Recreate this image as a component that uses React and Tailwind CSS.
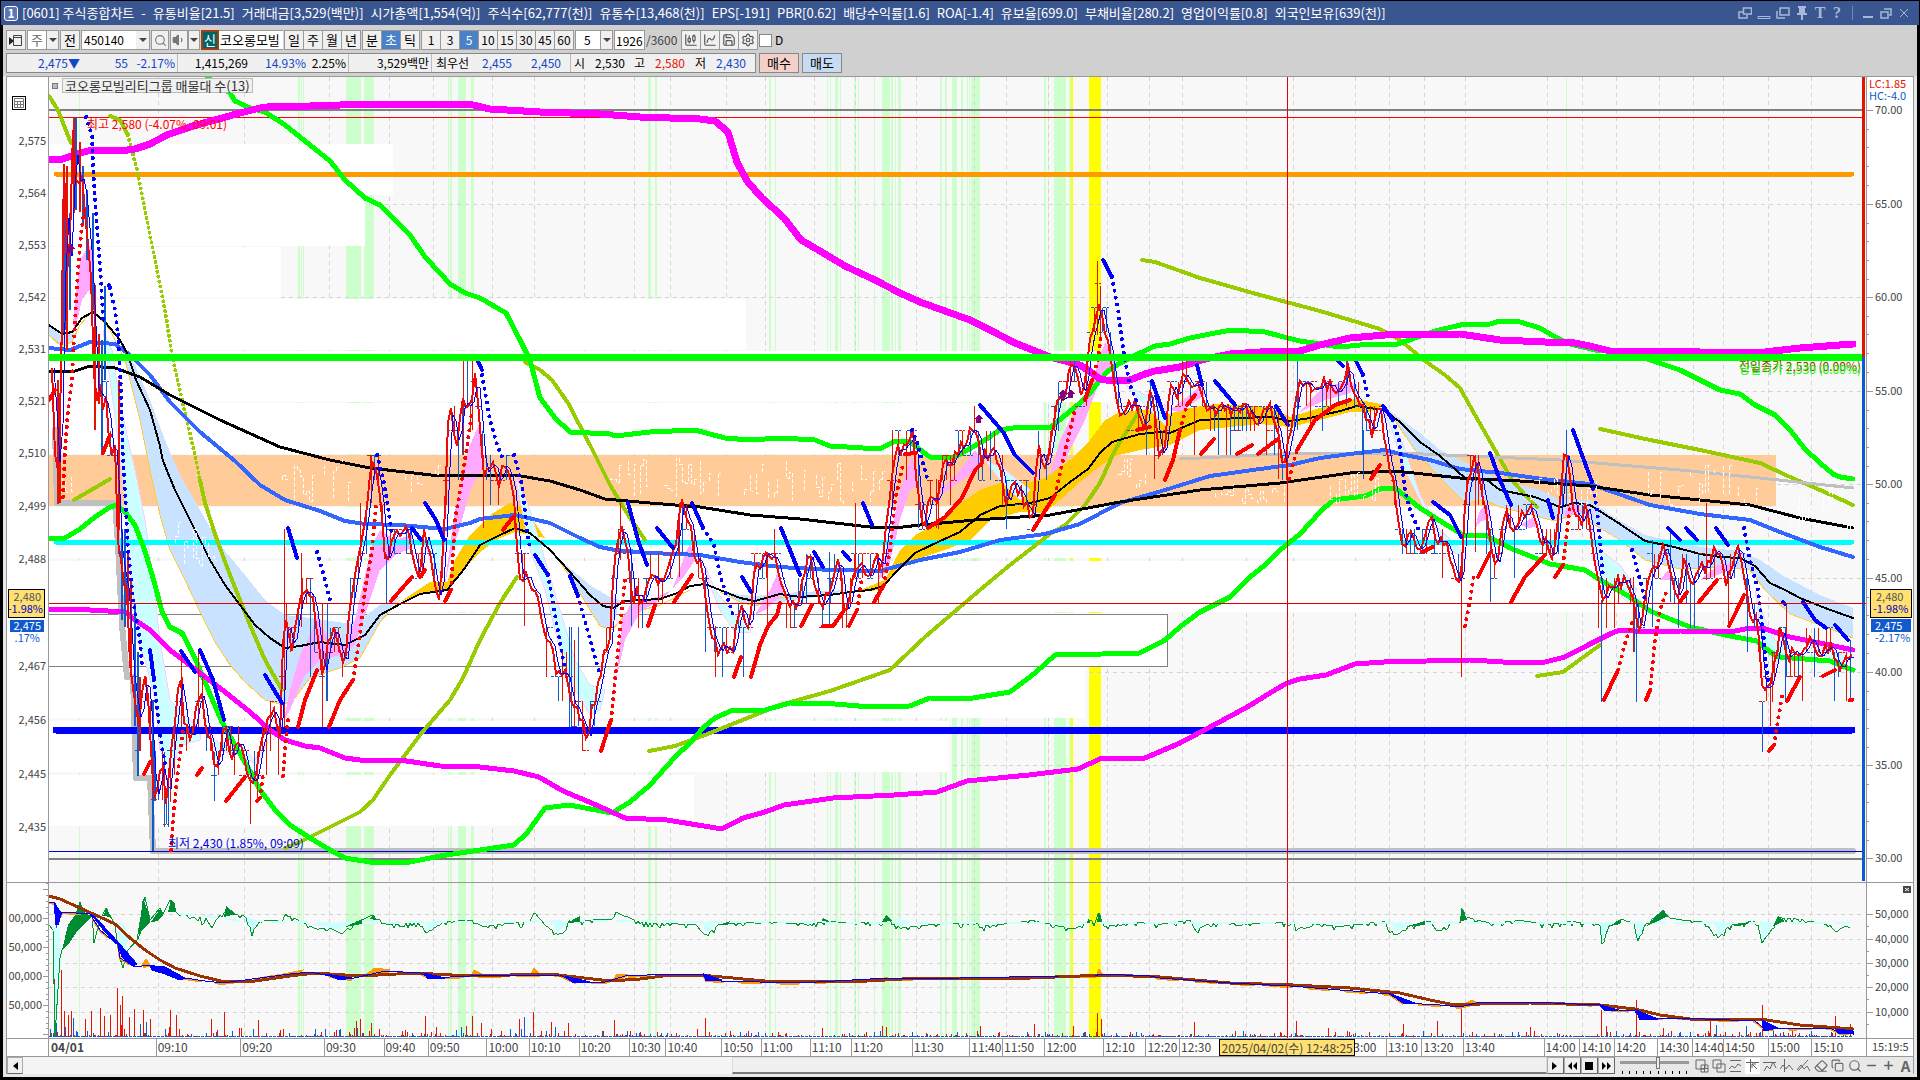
import {
  ChartCandlestick,
  ChartSpline,
  Save,
  Settings,
  Search,
  Volume1,
  Copy,
  Eraser,
  Minus,
  Plus,
} from "lucide-react";

// Shaded time zones: [x, width]
const greenBands = [
  [79, 1], [298, 2], [301, 1], [303, 1], [346, 15], [364, 10], [448, 1], [450, 2], [458, 8], [471, 3],
  [648, 3], [655, 2], [769, 2], [775, 1], [827, 1], [830, 1], [835, 3], [840, 1], [854, 2], [858, 1],
  [874, 1], [882, 8], [891, 2], [895, 1], [898, 3], [940, 2], [945, 2], [952, 5], [961, 2], [967, 1],
  [969, 1], [971, 9], [1044, 2], [1048, 1], [1054, 12], [1069, 2], [1566, 1],
];
const yellowBands = [[1071, 2], [1089, 12]];

// Volume profile rows: [y, right edge]
const profile = [
  [144, 393], [195, 365], [247, 281], [299, 746], [351, 1115], [403, 1042],
  [507, 1560], [561, 1768], [667, 1085], [721, 949], [775, 694],
];

const timeTicks = [
  [49, "04/01"], [158, "09:10"], [244, "09:20"], [329, "09:30"], [389, "09:40"], [433, "09:50"],
  [492, "10:00"], [534, "10:10"], [584, "10:20"], [634, "10:30"], [670, "10:40"], [726, "10:50"],
  [765, "11:00"], [814, "11:10"], [855, "11:20"], [916, "11:30"], [974, "11:40"], [1006, "11:50"],
  [1048, "12:00"], [1107, "12:10"], [1149, "12:20"], [1182, "12:30"], [1246, ""], [1293, ""],
  [1355, "3:00"], [1389, "13:10"], [1424, "13:20"], [1465, "13:40"], [1547, "14:00"], [1582, "14:10"],
  [1616, "14:20"], [1659, "14:30"], [1693, "14:40"], [1723, "14:50"], [1768, "15:00"], [1811, "15:10"],
];

const priceLabels = [
  [140, "2,575"], [192, "2,564"], [244, "2,553"], [296, "2,542"], [348, "2,531"], [400, "2,521"],
  [452, "2,510"], [505, "2,499"], [558, "2,488"], [665, "2,467"], [719, "2,456"], [773, "2,445"], [826, "2,435"],
];
const rightLabels = [
  [110, "70.00"], [204, "65.00"], [297, "60.00"], [391, "55.00"], [484, "50.00"],
  [578, "45.00"], [672, "40.00"], [765, "35.00"], [858, "30.00"],
];
const volumeGrid = [
  [914, "50,000"], [939, "40,000"], [963, "30,000"], [987, "20,000"], [1012, "10,000"],
];

const price =
  "52,370 54,430 57,500 60,420 62,350 64,170 66,260 68,300 70,240 72,150 74,118 77,210 80,160 84,200 88,240 92,285 94,370 97,400 99,380 102,410 105,390 108,430 113,450 117,455 118,540 123,580 128,600 130,670 135,690 138,745 142,690 146,680 150,720 153,800 157,785 162,760 166,800 170,770 173,740 178,690 181,680 184,725 190,735 194,720 198,690 203,700 206,745 212,740 216,780 222,735 226,730 232,760 238,735 243,755 250,780 256,770 260,745 266,735 271,710 276,720 281,735 284,600 286,620 290,650 296,630 300,600 305,585 312,590 316,625 320,650 323,690 328,640 333,625 338,650 343,670 347,640 350,600 357,570 361,540 367,500 372,465 378,475 382,520 386,570 391,545 394,530 402,530 410,535 415,560 420,575 425,525 430,560 435,580 440,595 444,540 448,430 452,410 456,450 460,420 464,400 470,410 475,380 480,430 484,480 492,455 498,490 505,460 512,480 516,530 520,575 530,580 537,600 545,630 552,650 557,680 565,670 572,700 580,715 587,740 592,710 598,690 602,660 610,640 614,560 620,530 626,540 632,600 638,590 644,610 650,570 658,590 665,575 672,550 678,530 682,505 690,525 695,560 703,570 706,600 712,640 720,650 733,645 742,610 750,630 754,570 765,560 775,550 782,590 788,610 798,600 805,570 810,555 815,590 822,605 832,580 838,560 845,610 852,580 858,560 867,580 875,555 882,570 887,520 893,460 900,450 913,435 918,500 924,530 932,490 938,500 943,460 950,465 960,450 965,440 975,425 982,460 990,450 1000,460 1006,500 1014,480 1024,500 1033,515 1038,450 1045,465 1050,440 1056,405 1065,390 1073,365 1076,375 1082,405 1088,350 1093,335 1100,295 1104,325 1110,345 1115,390 1120,415 1130,408 1140,407 1145,430 1150,385 1154,410 1160,460 1166,440 1169,390 1178,400 1182,370 1190,390 1200,382 1208,410 1218,408 1230,412 1240,408 1250,410 1255,430 1262,412 1272,410 1278,430 1283,478 1290,430 1294,410 1298,390 1304,385 1310,390 1320,382 1335,385 1343,395 1348,365 1352,385 1358,405 1365,410 1372,430 1380,408 1384,440 1390,470 1395,490 1400,530 1404,545 1410,530 1418,550 1425,530 1432,525 1440,545 1446,540 1452,570 1461,575 1465,500 1472,460 1478,475 1485,510 1490,540 1497,570 1505,510 1512,535 1520,515 1530,505 1535,525 1545,540 1553,560 1560,500 1566,440 1572,500 1580,525 1587,505 1592,550 1600,590 1605,600 1612,580 1622,580 1632,600 1640,630 1647,580 1655,570 1665,540 1670,580 1678,590 1684,555 1692,590 1700,570 1710,560 1718,550 1727,590 1735,550 1742,560 1750,610 1757,620 1763,690 1770,685 1776,660 1781,620 1788,660 1796,650 1803,660 1808,635 1815,645 1822,660 1830,640 1838,670 1845,665 1853,655";

// [x, top, bottom, up]
const longWicks = [
  [63, 165, 333, 0], [65, 190, 330, 0], [66, 166, 350, 1], [69, 213, 310, 0], [73, 117, 213, 1], [75, 117, 210, 0],
  [79, 142, 212, 1], [82, 166, 225, 0], [86, 190, 260, 0], [92, 213, 310, 0], [94, 285, 430, 1], [98, 334, 404, 1],
  [104, 286, 380, 0], [61, 286, 345, 1], [57, 380, 504, 1], [59, 400, 503, 1], [101, 340, 455, 0], [118, 380, 530, 1],
  [121, 529, 620, 0], [124, 529, 627, 0], [127, 553, 627, 1], [130, 580, 677, 1], [134, 604, 726, 0], [137, 652, 776, 0],
  [139, 677, 751, 1], [152, 700, 851, 0], [154, 751, 801, 0], [164, 752, 827, 0], [168, 776, 827, 0], [170, 752, 802, 1],
  [181, 651, 727, 1], [198, 652, 727, 1], [214, 752, 801, 0], [257, 752, 801, 1], [284, 529, 727, 1], [301, 553, 627, 1],
  [310, 578, 677, 0], [322, 604, 727, 1], [327, 604, 701, 0], [360, 503, 560, 1], [371, 455, 503, 1], [463, 361, 455, 1],
  [467, 361, 406, 0], [472, 361, 430, 1], [483, 455, 528, 1], [524, 553, 626, 1], [569, 627, 727, 0], [571, 627, 727, 0],
  [574, 640, 727, 1], [578, 627, 726, 0], [620, 503, 560, 1], [631, 552, 626, 0], [658, 553, 602, 1], [679, 503, 577, 1],
  [705, 577, 652, 0], [715, 626, 677, 1], [743, 627, 677, 0], [767, 552, 626, 1], [829, 552, 626, 0], [855, 503, 577, 1],
  [892, 430, 503, 1], [918, 455, 528, 0], [936, 479, 528, 1], [1097, 261, 335, 1], [1100, 286, 340, 1], [1154, 406, 479, 1],
  [1182, 361, 406, 1], [1194, 406, 455, 1], [1230, 431, 455, 0], [1278, 431, 479, 1], [1297, 361, 430, 0], [1347, 361, 385, 1],
  [1363, 430, 479, 0], [1461, 552, 677, 1], [1475, 455, 552, 1], [1490, 530, 602, 0], [1566, 430, 505, 0], [1601, 600, 702, 0],
  [1636, 600, 702, 0], [1633, 577, 652, 1], [1652, 540, 627, 0], [1670, 528, 602, 0], [1706, 503, 580, 1], [1728, 577, 627, 1],
  [1747, 577, 652, 0], [1762, 702, 752, 0], [1772, 652, 702, 1], [1785, 627, 702, 0], [1786, 603, 640, 1], [1850, 640, 702, 0],
];

const sarBlue = [
  "109,285 110,288", "150,650 154,680", "181,651 195,672", "200,650 213,680 224,720", "265,675 282,703",
  "288,528 297,558", "412,528 421,540", "425,503 436,520 444,540", "478,361 482,370", "535,555 548,575",
  "570,576 578,596", "628,503 638,540 647,565", "657,528 673,548", "692,503 703,528", "742,577 751,592",
  "781,528 790,550 800,575", "814,552 823,567", "843,552 850,560", "863,503 872,525", "980,405 1003,432 1015,455 1033,473",
  "1103,260 1112,277", "1152,381 1165,418", "1197,365 1202,385", "1215,381 1235,405", "1276,406 1288,425",
  "1337,360 1343,366", "1356,361 1363,375", "1383,406 1393,420", "1433,502 1450,515 1461,537", "1490,453 1500,480 1511,505",
  "1548,500 1553,518", "1573,430 1582,455 1592,482", "1668,528 1680,540", "1686,528 1697,540", "1716,528 1728,545",
  "1803,602 1815,620 1826,628", "1835,625 1848,640", "1783,602 1785,604",
];
const sarBlueDots = [
  "86,117 92,135 93,165 95,200 98,240 101,280 103,320", "110,288 115,310 118,335", "118,335 121,390 123,460 125,490 128,550 133,600 140,640 142,665",
  "154,680 160,735 166,770", "317,552 325,580 330,600", "377,455 383,478 387,500 392,535", "482,375 490,420 497,445 503,459",
  "514,455 522,485 527,530 530,550", "548,575 556,620 564,665", "578,596 586,625 600,675", "703,528 714,545 720,575 733,615",
  "912,430 918,445 927,478", "1112,277 1118,310 1124,355 1130,385 1138,405", "1363,375 1369,402",
  "1393,420 1399,440 1405,490 1410,510 1420,533", "1592,482 1597,510 1603,575",
  "1744,528 1750,560 1758,590 1763,630 1766,665 1768,680", "1632,550 1640,580 1645,600",
];
const sarRed = [
  "49,400 55,390", "103,453 110,435", "144,774 150,762", "197,775 202,768", "226,801 245,777", "257,801 260,798",
  "298,727 305,700 317,670", "329,727 340,700 353,680", "391,601 412,577", "420,577 425,570", "445,601 451,590",
  "503,530 513,517", "601,751 611,720", "648,626 655,605", "674,602 692,575", "734,677 741,657", "751,677 760,645 768,626 777,615 780,603",
  "801,626 812,605", "823,626 833,626 843,612", "849,626 857,610", "874,602 884,585", "905,454 916,453",
  "928,528 945,517 962,498 975,470 980,465", "1033,530 1055,495", "1085,400 1092,380", "1137,430 1150,427", "1165,480 1173,460 1180,430",
  "1187,405 1195,395", "1201,454 1214,439", "1237,454 1252,445", "1258,454 1278,439", "1297,450 1315,420 1335,405 1350,400",
  "1371,479 1380,465", "1422,552 1433,547", "1478,577 1490,553", "1511,602 1525,577 1545,555", "1555,577 1563,565",
  "1604,700 1618,670", "1646,700 1650,690", "1680,602 1687,592", "1699,602 1717,580", "1729,626 1737,610 1744,595",
  "1769,751 1774,745", "1787,701 1800,677", "1823,676 1835,670", "1850,700 1852,700",
];
const sarRedDots = [
  "63,497 65,450 68,410 72,380 75,320 78,270 81,235 85,205", "171,850 174,808 178,770 183,730", "260,798 263,775",
  "283,776 285,750 288,720", "353,680 360,635 365,590 372,550 376,505", "451,590 455,520 462,480 468,440 472,412",
  "611,720 615,680 620,630 625,580", "857,610 862,577", "884,585 890,550 895,500 903,465", "1055,495 1062,465 1070,430 1075,410",
  "1092,380 1098,360 1101,335", "1180,430 1187,405", "1289,479 1297,450", "1465,626 1470,600 1474,575",
  "1563,565 1566,540 1570,505", "1618,670 1626,640 1633,620", "1650,690 1655,640 1660,610 1667,590", "1774,745 1778,720 1783,690",
];

const olive = [
  "49,96 58,110 65,128 71,143", "110,116 120,120 128,135", "200,480 205,503 217,540 230,575 250,625 265,660 282,690",
  "74,500 110,479", "285,848 300,842 330,827 360,812 373,800 390,775 420,735 450,700 463,678 480,640 500,603 517,577",
  "525,362 540,370 552,380 568,403 590,445 610,485 630,518 645,540",
  "649,751 675,746 705,735 780,705 830,691 890,670 925,637 960,607 980,590 1010,565 1050,534 1065,525 1085,505 1100,483 1115,450 1140,410",
  "1142,260 1155,262 1200,278 1260,295 1320,311 1380,329 1400,340 1425,361 1445,375 1460,388 1475,415 1495,450 1512,480 1525,495 1537,507",
  "1537,676 1563,672 1600,645", "1600,429 1650,440 1700,450 1760,463 1790,477 1820,490 1853,505",
];

const magentaTop =
  "49,159 63,159 80,153 92,150 120,151 135,149 150,144 167,135 193,126 215,120 240,113 260,108 275,106 310,106 340,105 375,104 410,104 473,105 490,109 540,112 600,114 640,117 700,119 715,121 728,132 737,162 747,181 762,198 784,218 801,240 820,251 845,266 875,280 900,293 920,302 945,311 970,320 990,330 1015,343 1035,351 1050,357 1080,365 1092,373 1100,379 1112,381 1130,380 1145,374 1155,371 1180,367 1205,359 1230,354 1260,352 1300,351 1320,345 1350,338 1385,335 1460,334 1500,340 1545,342 1570,342 1590,346 1610,351 1640,351 1700,352 1765,352 1800,348 1853,344";
const magentaLow =
  "49,609 90,610 125,612 135,620 150,630 170,650 200,673 225,692 250,712 270,730 285,740 305,746 320,748 345,758 360,760 400,760 440,766 480,767 514,771 539,777 563,791 594,804 625,818 667,820 722,829 743,818 765,812 784,805 833,798 894,795 937,792 967,781 1029,775 1078,769 1102,758 1145,758 1180,743 1212,726 1249,706 1270,693 1287,683 1300,679 1326,675 1355,664 1384,662 1470,660 1520,663 1545,662 1565,657 1590,644 1610,634 1620,630 1650,632 1680,631 1730,632 1750,628 1762,628 1790,637 1820,643 1853,650";
const greenTop =
  "200,70 217,85 230,93 235,101 250,108 265,112 285,125 310,145 330,161 345,180 365,198 380,205 395,220 410,235 425,257 440,273 450,284 465,293 480,298 506,313 520,340 530,360 540,398 555,418 570,432 610,434 615,436 650,432 695,430 725,438 750,440 780,438 815,440 830,446 880,449 895,441 910,442 930,457 955,457 985,440 1000,430 1020,427 1050,428 1062,418 1080,403 1090,393 1100,380 1108,371 1120,363 1140,353 1155,346 1170,344 1190,338 1215,333 1232,330 1265,332 1280,336 1300,341 1320,344 1340,347 1370,344 1395,345 1435,331 1465,324 1490,324 1500,321 1520,322 1540,328 1555,337 1570,344 1600,351 1620,350 1650,360 1680,370 1720,390 1740,394 1755,405 1775,415 1790,430 1805,449 1820,463 1833,474 1840,477 1853,479";
const greenLow =
  "49,539 65,538 80,529 95,517 110,507 117,505 125,512 135,525 145,551 155,585 162,612 170,627 182,633 195,658 210,694 222,722 235,745 250,771 260,790 275,810 290,825 310,838 330,850 345,858 370,862 410,862 440,856 480,850 514,845 527,833 545,808 569,805 612,813 630,802 650,785 675,757 690,743 703,728 715,718 733,710 765,710 790,703 835,704 870,707 910,706 930,698 967,699 1010,692 1035,673 1055,655 1102,654 1140,653 1165,640 1180,627 1200,612 1230,597 1250,577 1265,565 1280,550 1300,534 1320,512 1333,500 1365,496 1380,489 1395,488 1420,508 1445,524 1465,536 1485,535 1510,548 1550,564 1585,570 1600,580 1630,597 1650,611 1690,627 1730,636 1757,641 1770,652 1780,657 1830,661 1853,670";
const blueAvg =
  "49,348 70,350 90,342 115,344 130,355 150,375 170,402 200,432 235,461 260,485 285,500 320,511 345,521 365,524 400,525 445,529 470,523 480,519 515,515 550,523 580,538 600,547 615,550 650,553 700,555 740,562 780,567 830,570 880,571 920,560 960,552 1000,540 1045,534 1080,524 1120,503 1165,490 1210,476 1260,469 1290,465 1320,458 1350,454 1385,450 1400,454 1430,460 1460,469 1500,473 1550,480 1590,484 1650,505 1700,514 1750,520 1780,532 1820,547 1853,557";
const blackSlow =
  "49,371 75,371 90,366 115,368 140,377 170,395 220,420 280,447 330,460 370,468 440,476 515,475 550,481 580,490 605,499 650,503 700,507 750,515 800,519 870,527 895,528 920,525 975,520 1050,515 1120,502 1200,490 1280,483 1350,473 1395,471 1460,478 1520,481 1590,486 1650,495 1750,505 1800,518 1853,528";
const blackFast =
  "49,325 62,334 72,332 82,318 93,312 105,322 120,340 128,355 136,380 150,410 160,446 163,461 175,490 190,520 210,560 225,585 240,605 255,625 270,638 285,648 300,646 320,642 345,645 365,635 380,615 400,604 420,594 447,590 465,568 480,545 500,535 515,528 530,533 550,550 570,572 590,595 603,606 613,608 625,601 660,599 680,592 690,586 705,584 720,590 740,598 755,601 780,594 800,597 830,595 850,592 870,590 883,586 900,568 915,553 940,541 960,532 980,515 1000,506 1030,503 1050,498 1070,482 1088,469 1100,453 1112,442 1140,434 1160,432 1170,433 1200,420 1240,418 1270,417 1290,421 1310,418 1340,411 1357,406 1370,408 1383,410 1400,422 1420,442 1440,456 1465,478 1487,480 1500,490 1535,497 1560,507 1575,503 1590,505 1620,524 1645,541 1670,546 1700,554 1720,557 1740,558 1755,566 1770,583 1785,590 1800,598 1825,608 1853,618";

const blueClouds = [
  "49,325 62,336 75,330 72,342 62,347 49,335",
  "120,340 135,365 150,400 165,440 180,475 200,510 220,545 245,575 265,600 285,615 310,618 345,623 360,620 380,605 400,597 380,622 360,658 340,668 310,678 295,698 283,705 265,700 245,682 230,665 215,642 200,612 185,580 170,550 160,515 150,470 140,420 125,360",
  "560,560 590,585 610,597 620,600 612,630 600,626 590,610 575,585",
  "720,590 740,595 755,596 800,592 850,590 800,600 755,606 740,602",
  "1390,411 1420,433 1440,450 1470,465 1500,480 1540,490 1560,500 1590,500 1610,515 1645,535 1700,547 1740,551 1760,560 1785,577 1820,595 1853,608 1853,638 1820,625 1790,614 1765,590 1750,570 1720,567 1680,569 1645,560 1620,540 1600,528 1575,514 1555,521 1520,512 1500,507 1485,500 1465,503 1440,478 1415,450 1395,420",
];
const goldLines = [
  "49,335 62,347 72,342 80,325 93,310 110,330 125,360 140,420 150,470 160,515 170,550 185,580 200,612 215,642 230,665 245,682 265,700 283,705 295,698 310,678 340,668 360,658 380,622 400,600",
  "560,562 575,585 590,610 600,626 612,630 625,615 660,605 690,590",
  "720,592 740,602 755,606 780,598 855,592",
  "1385,406 1415,450 1440,478 1465,503 1485,500 1500,507 1520,512 1555,521 1575,514 1600,528 1620,540 1645,560 1680,569 1720,567 1750,570 1765,590 1790,614 1820,625 1853,638",
];
const goldClouds = [
  "400,602 430,582 447,582 455,560 470,535 490,515 510,503 525,508 545,538 530,535 515,532 500,538 480,552 465,568 448,590 420,594",
  "855,592 885,580 900,550 915,535 935,525 950,510 980,490 1000,483 1030,482 1045,478 1070,460 1090,440 1105,420 1120,412 1150,409 1165,415 1190,408 1215,404 1270,407 1290,417 1320,408 1355,399 1385,405 1370,412 1350,412 1320,420 1290,427 1260,424 1220,428 1200,430 1170,445 1140,450 1115,456 1095,470 1080,482 1060,500 1045,513 1020,512 990,520 970,540 945,550 920,558 900,565 880,590",
];
const pinkClouds = [
  "75,300 80,260 88,247 92,245 93,285 82,300 75,330 73,325", "272,742 283,725 290,690 300,655 310,635 318,615 328,640 345,645 355,620 365,575 372,545 380,530 395,540 412,535 412,548 395,555 380,570 370,600 355,645 340,655 320,660 305,675 290,710",
  "444,590 455,510 462,480 468,450 480,422 484,465 470,490 462,520 450,560", "616,680 622,620 630,605 650,600 672,590 685,555 690,543 695,560 685,575 665,597 640,612 625,640",
  "755,615 770,590 778,572 785,592 765,610", "878,580 890,540 900,490 912,455 918,485 910,490 900,520 888,570", "935,495 960,470 975,450 982,460 970,475 945,492",
  "1050,475 1060,440 1075,410 1090,395 1098,360 1105,343 1112,350 1115,370 1100,380 1085,420 1065,460", "1170,410 1190,395 1200,385 1205,395 1180,412",
  "1300,412 1320,390 1345,381 1357,385 1350,393 1325,400", "1474,530 1480,510 1488,503 1490,518 1480,522", "1564,515 1570,500 1582,512 1565,517",
  "1520,525 1532,518 1540,525 1530,528", "1660,580 1668,570 1672,580", "1700,580 1718,565 1740,562 1730,570 1710,578",
];
const cyanClouds = [
  "103,330 112,350 118,390 128,440 135,470 145,520 152,570 160,640 170,700 185,715 200,730 200,740 182,745 170,770 160,750 155,700 145,660 137,640 130,560 125,500 118,440 110,380",
  "208,735 222,745 240,745 255,760 268,742 258,765 240,755 215,750", "515,475 530,510 545,560 560,610 575,660 590,685 605,690 600,710 590,715 575,690 560,650 545,590 530,550",
  "705,565 715,590 735,615 750,625 750,632 735,632 720,610 708,580", "985,460 1005,470 1030,490 1020,500 1000,480", "1125,385 1165,405 1165,425 1140,400",
  "1383,410 1395,425 1405,450 1420,495 1440,530 1460,548 1465,560 1445,545 1425,510 1405,470 1392,430", "1588,520 1600,550 1620,565 1637,590 1630,605 1615,590 1600,575",
  "1755,590 1765,620 1775,640 1790,645 1775,665 1762,640", "1810,645 1840,655 1850,650 1840,665", "445,545 442,575 430,560 425,545",
];

const brownLine =
  "49,896 60,899 80,908 100,917 115,924 130,938 145,950 160,960 175,968 200,976 225,982 255,981 290,976 315,973 360,976 415,973 470,976 550,974 610,981 640,979 670,975 700,975 765,981 850,982 920,978 1030,978 1105,975 1160,977 1230,983 1293,985 1350,988 1400,993 1430,1000 1455,1005 1480,1004 1530,1003 1600,1005 1635,1009 1660,1015 1690,1019 1760,1019 1800,1025 1853,1029";
const obvLine =
  "49,902 55,903 58,925 62,912 90,914 100,930 118,945 120,958 135,967 150,965 165,968 178,977 205,981 222,983 245,980 290,974 310,972 330,976 350,979 385,971 420,973 430,978 470,976 560,975 575,982 605,982 625,976 670,974 703,974 706,980 720,981 800,983 870,979 960,978 1060,976 1095,976 1100,974 1150,976 1160,978 1230,983 1290,986 1340,990 1390,994 1403,1003 1440,1005 1460,1007 1480,1002 1530,1002 1600,1005 1603,1009 1635,1011 1640,1018 1680,1018 1755,1021 1765,1029 1830,1028 1840,1033 1853,1033";
const obvFills = [
  "54,902 61,913 59,922 56,925", "91,914 98,920 118,942 130,956 137,964 132,966 122,957 118,944 105,932", "424,973 445,978 428,979",
  "150,966 165,967 185,978 180,980 165,974 152,970", "325,974 352,978 340,980", "565,976 590,982 572,982", "704,974 722,980 706,981",
  "1388,993 1415,1003 1405,1004", "1601,1005 1618,1010 1604,1010", "1636,1010 1658,1019 1640,1020", "1762,1020 1778,1028 1764,1031", "1836,1029 1853,1031 1853,1034 1838,1033",
];
const obvOrange = [
  "142,965 146,959 150,965", "258,978 283,974 303,970 300,974 270,978", "365,975 375,968 390,970 372,976", "472,974 474,970 482,974", "531,974 534,968 540,974",
  "613,980 617,974 628,975 620,981", "1096,976 1099,969 1103,975", "1461,1006 1472,1000 1478,1003 1465,1007", "882,979 886,977 890,979",
];
const flow =
  "49,925 53,930 55,1036 60,958 62,950 70,935 80,903 86,915 92,912 94,943 100,920 106,908 115,925 119,955 123,968 128,950 137,940 143,905 145,897 150,920 160,908 163,914 170,900 176,912 200,917 203,925 206,918 211,927 224,910 230,913 245,916 252,932 260,921 283,919 285,914 300,921 315,928 330,928 342,934 352,924 373,915 385,924 420,923 426,933 445,921 472,920 482,926 500,924 530,921 534,912 545,925 558,935 570,920 613,919 615,912 630,918 640,922 660,923 695,924 705,935 720,924 760,921 775,922 812,924 822,920 840,922 860,922 882,922 886,916 900,928 930,924 975,922 980,926 1000,924 1033,920 1055,925 1075,929 1090,920 1095,923 1099,911 1103,926 1140,922 1160,924 1190,920 1195,930 1210,923 1240,923 1260,923 1295,922 1296,930 1310,923 1340,926 1385,921 1390,929 1397,935 1410,925 1430,921 1437,932 1450,923 1461,921 1461,907 1467,917 1490,923 1520,920 1550,924 1570,921 1600,924 1602,942 1610,925 1622,919 1635,924 1637,943 1645,925 1663,910 1670,918 1705,922 1712,932 1720,936 1730,925 1757,920 1762,943 1775,925 1778,917 1800,919 1830,925 1836,932 1845,926 1853,929";
const flowGreen = [
  "62,950 68,925 75,915 80,901 84,912 92,917 78,930 68,945", "138,940 141,915 143,897 148,912 150,922 142,930", "151,922 160,909 163,915 158,921",
  "168,912 171,900 175,903 176,912", "224,917 226,906 236,914 228,916", "103,916 107,907 110,917", "345,927 362,919 362,924", "370,919 374,914 376,920", "567,923 580,916 580,922",
  "718,925 730,921 728,925", "822,921 823,918 830,922", "882,922 886,915 892,921", "1087,923 1089,918 1090,923", "1097,922 1099,910 1101,922",
  "1405,927 1425,921 1425,925", "1461,921 1461,907 1467,920", "1607,927 1622,919 1620,924", "1645,927 1663,909 1668,916 1660,920", "1728,927 1752,921 1745,925", "1773,926 1778,916 1785,921",
];
const flowCyan = [
  "53,926 56,1030 61,960 60,930", "117,922 122,962 128,942 125,925", "242,915 252,932 258,921", "425,922 428,931 440,922", "552,922 558,933 568,922",
  "702,922 706,933 716,924", "1390,922 1397,932 1408,925", "1600,922 1602,940 1610,924", "1636,924 1638,941 1646,924", "1712,921 1720,935 1728,924",
  "1760,921 1763,942 1772,924", "310,924 340,930 350,922", "895,918 900,926 912,922", "1193,922 1196,929 1202,923",
];
const volSpikes = [
  [54, 935, 1], [61, 970, 1], [56, 905, 0], [64, 1011, 1], [71, 1011, 1], [85, 1019, 1], [91, 1011, 1], [100, 1008, 1], [104, 1016, 1], [110, 1015, 1],
  [117, 988, 1], [120, 1005, 1], [122, 996, 1], [134, 1009, 1], [143, 1010, 1], [150, 1019, 1], [170, 1010, 1], [176, 1015, 1], [211, 1019, 1],
  [224, 1012, 1], [258, 1020, 1], [356, 1021, 1], [360, 1019, 1], [371, 1023, 1], [425, 1016, 1], [472, 1016, 1], [481, 1023, 1], [519, 1019, 1],
  [524, 1017, 0], [533, 1012, 1], [551, 1022, 1], [568, 1023, 1], [614, 1020, 1], [705, 1018, 1], [697, 1029, 1], [822, 1028, 1], [882, 1026, 1],
  [886, 1027, 1], [980, 1026, 1], [1034, 1024, 1], [1073, 1026, 1], [1097, 1013, 1], [1101, 1019, 1], [1194, 1022, 1], [1296, 1021, 1], [1328, 1028, 1],
  [1403, 1024, 1], [1437, 1021, 1], [1461, 1006, 1], [1530, 1027, 1], [1601, 1010, 1], [1606, 1026, 1], [1636, 1000, 1], [1663, 1028, 1],
  [1710, 1018, 1], [1716, 1025, 0], [1746, 1026, 0], [1762, 1005, 1], [1835, 1016, 1], [1850, 1024, 1],
];

// Repeatable pseudo random, so the bars don't jump between renders
const noise = (n) => {
  const v = Math.sin(n * 127.1 + 11.7) * 43758.5453;
  return v - Math.floor(v);
};

const toPoints = (str) => str.split(" ").map((p) => p.split(",").map(Number));
const valueAt = (points, x) => {
  const i = points.findIndex((p) => p[0] >= x);
  if (i <= 0) return points[0][1];
  const [x0, y0] = points[i - 1];
  const [x1, y1] = points[i];
  return y0 + ((y1 - y0) * (x - x0)) / (x1 - x0);
};

const TICK = 24.6;
const level = (y) => 357 + Math.round((y - 357) / TICK) * TICK;

const pricePoints = toPoints(price);
const closes = [];
for (let x = 52; x < 1853; x += 3) {
  closes.push([x, valueAt(pricePoints, x) + (noise(x) - 0.5) * 16]);
}
const closeLine = closes.map((p) => p.join(",")).join(" ");
const lagLine = closes.map(([x, y], i) => {
  const prev = closes[Math.max(0, i - 1)][1];
  return `${x + 2},${Math.round((y + prev) / 2)}`;
}).join(" ");

const flowPoints = toPoints(flow);
const flowLine = flowPoints.filter((p) => p[0] < 180).map((p) => p.join(",")).concat(
  Array.from({ length: 836 }, (_, i) => {
    const x = 180 + i * 2;
    const dip = noise(x * 1.3) > 0.7 ? noise(x * 3.1) * 5 : 0;
    return `${x},${Math.round(valueAt(flowPoints, x) + dip)}`;
  })
).join(" ");

const wicks = [];
const dashes = [];
for (let x = 106; x < 1850; x += 4) {
  const y = valueAt(pricePoints, x);
  const top = level(y - 12);
  const r = noise(x * 3);
  if (r > 0.35) wicks.push([x, top, top + TICK * (r > 0.9 ? 2 : 1), noise(x * 7) > 0.42]);
  if (r < 0.7) dashes.push([x - 3, noise(x * 5) > 0.5 ? top : top + TICK, noise(x * 9) > 0.5]);
}

const dashPath = (from, to, top, height, seed) => {
  let d = `M${from} ${top + height / 2}`;
  for (let x = from; x < to; x += 3) {
    const y = Math.round(top + noise(x + seed) * height);
    d += noise(x * 2 + seed) > 0.45 ? `V${y}H${x + 3}` : `M${x + 3} ${y}`;
  }
  return d;
};
const ghost = [
  dashPath(282, 350, 458, 44, 1), dashPath(405, 440, 458, 44, 2), dashPath(610, 720, 458, 40, 3), dashPath(735, 885, 460, 44, 4),
  dashPath(1115, 1150, 458, 30, 5), dashPath(1215, 1290, 480, 25, 6), dashPath(1330, 1380, 468, 36, 7), dashPath(1530, 1600, 478, 30, 8),
  dashPath(1645, 1760, 465, 40, 9), dashPath(1778, 1853, 485, 50, 10), dashPath(175, 218, 520, 45, 11), dashPath(62, 72, 458, 40, 12),
].join("");

const bars = [];
for (let x = 50; x < 1852; x += 1) {
  const r = noise(x * 1.7);
  const scale = x < 170 ? 22 : x < 560 ? 10 : 5;
  if (r > 0.55) bars.push([x, Math.round(1 + Math.pow(noise(x * 4.3), 4) * scale), noise(x * 2.9) > 0.4]);
}

const Line = ({ points, color, width, dash }) => (
  <polyline
    points={points}
    fill="none"
    stroke={color}
    strokeWidth={width}
    strokeLinecap="round"
    strokeLinejoin="round"
    strokeDasharray={dash}
  />
);

const Bands = ({ top, height }) => (
  <g>
    {greenBands.map(([x, w]) => (
      <rect key={x} x={x} y={top} width={w} height={height} fill="#ccffcc" />
    ))}
    {yellowBands.map(([x, w]) => (
      <rect key={x} x={x} y={top} width={w} height={height} fill="#ffff00" />
    ))}
  </g>
);

const GridColumns = ({ top, bottom }) => (
  <g stroke="#d4d4d4" strokeDasharray="4 4">
    {timeTicks.slice(1).map(([x]) => (
      <line key={x} x1={x + 0.5} x2={x + 0.5} y1={top} y2={bottom} />
    ))}
  </g>
);

const PricePlot = () => (
  <svg
    className="block h-full w-full bg-[#f8f8f8]"
    viewBox="49 77 1817 805"
    preserveAspectRatio="none"
    shapeRendering="crispEdges"
  >
    <Bands top={77} height={805} />
    <GridColumns top={77} bottom={882} />
    {rightLabels.map(([y]) => (
      <line key={y} x1="49" x2="1862" y1={y + 0.5} y2={y + 0.5} stroke="#d4d4d4" strokeDasharray="4 4" />
    ))}

    {/* Volume profile */}
    {profile.map(([y, right]) => (
      <rect key={y} x="49" y={y} width={right - 49} height="51" fill="#fff" />
    ))}
    <rect x="49" y="613" width="1118" height="54" fill="#fff" />
    <path d="M49 614.5H1167.5V666.5H49" fill="none" stroke="#808080" />
    <rect x="49" y="455" width="1727" height="51" fill="#ffcc99" />

    {/* Clouds */}
    {blueClouds.map((p) => <polygon key={p} points={p} fill="#c8e2ff" />)}
    {goldClouds.map((p) => <polygon key={p} points={p} fill="#ffcc00" />)}
    {goldLines.map((p) => <Line key={p} points={p} color="#ffcc33" width={1} />)}
    {cyanClouds.map((p) => <polygon key={p} points={p} fill="#ccffff" stroke="#ffccff" />)}
    {pinkClouds.map((p) => <polygon key={p} points={p} fill="#ffaaff" />)}

    {/* Horizontal levels */}
    <line x1="49" x2="1862" y1="110" y2="110" stroke="#808080" strokeWidth="2" />
    <line x1="49" x2="1862" y1="117.5" y2="117.5" stroke="#f00" />
    <line x1="49" x2="1862" y1="859" y2="859" stroke="#808080" strokeWidth="2" />
    <Line points="55,430 57,503 115,503 118,545 122,625 127,677 133,677 136,778 150,778 153,851 1853,851" color="#c0c0c0" width={6} />
    <line x1="49" x2="1862" y1="851.5" y2="851.5" stroke="#00c" />
    <Line points="56,174 1852,174" color="#ff9900" width={5} />
    <Line points="56,542 1852,542" color="#00ffff" width={5} />
    <Line points="56,730 1852,730" color="#0000ff" width={7} />

    {/* Moving averages and envelopes */}
    {olive.map((p) => <Line key={p} points={p} color="#99cc00" width={4} />)}
    <Line points="128,135 137,170 145,210 155,260 165,310 172,355 182,400 195,455 200,480" color="#99cc00" width={4} dash="0 5" />
    <Line points="1180,459 1300,453 1400,453 1560,460 1680,470 1760,478 1853,488" color="#c0c0c0" width={3} />
    <Line points={blueAvg} color="#3366ff" width={4} />
    <Line points={blackSlow} color="#000" width={3} />
    <Line points={blackFast} color="#000" width={2} />
    <Line points={greenTop} color="#00ff00" width={5} />
    <Line points={greenLow} color="#00ff00" width={5} />
    <Line points={magentaTop} color="#ff00ff" width={7} />
    <Line points={magentaLow} color="#ff00ff" width={5} />
    <path d={ghost} fill="none" stroke="#fff" strokeDasharray="4 2" />

    {/* Price */}
    {wicks.map(([x, top, bottom, up]) => (
      <line key={x} x1={x + 0.5} x2={x + 0.5} y1={top} y2={bottom} stroke={up ? "#e51400" : "#0f5acd"} />
    ))}
    {dashes.map(([x, y, up]) => (
      <line key={x} x1={x} x2={x + 6} y1={y} y2={y} stroke={up ? "#e51400" : "#0f5acd"} strokeDasharray="3 1" />
    ))}
    {longWicks.map(([x, top, bottom, up], i) => (
      <line
        key={i}
        x1={x + 0.5}
        x2={x + 0.5}
        y1={top}
        y2={bottom}
        stroke={up ? "#e51400" : "#0f5acd"}
        strokeWidth={x < 160 ? 2 : 1}
      />
    ))}
    <polyline points={closeLine} fill="none" stroke="#ee0a0a" strokeWidth="2" />
    <polyline points={lagLine} fill="none" stroke="#0000ff" strokeWidth="1" />
    {sarBlue.map((p) => <Line key={p} points={p} color="#0000ff" width={4} />)}
    {sarBlueDots.map((p) => <Line key={p} points={p} color="#0000ff" width={4} dash="0 7" />)}
    {sarRed.map((p) => <Line key={p} points={p} color="#ff0000" width={4} />)}
    {sarRedDots.map((p) => <Line key={p} points={p} color="#ff0000" width={4} dash="0 7" />)}
    <Line points="49,357 1862,357" color="#00ff00" width={7} />
    {[[71, 249], [979, 419], [1063, 394], [1071, 394]].map(([x, y]) => (
      <path key={x} d={`M${x} ${y - 4}l4 4h-2v4h-5v-4h-2z`} fill="#800080" />
    ))}

    <g fontSize="12">
      <text x="87" y="129" fill="#f00">최고 2,580 (-4.07%, 09:01)</text>
      <text x="168" y="848" fill="#00d">최저 2,430 (1.85%, 09:09)</text>
      <text x="1861" y="371" textAnchor="end" fill="#993300">전일종가 2,530 (0.00%)</text>
      <text x="1861" y="374" textAnchor="end" fill="#00ff00">당일시가 2,530 (0.00%)</text>
    </g>

    <rect x="1862" y="77" width="3" height="280" fill="#e51400" />
    <rect x="1862" y="357" width="3" height="524" fill="#0f5acd" />
    <path d="M49 603.5H1866M1287.5 77V882" stroke="#dd0000" />
  </svg>
);

const VolumePlot = () => (
  <svg
    className="block h-full w-full bg-[#f8f8f8]"
    viewBox="49 883 1817 155"
    preserveAspectRatio="none"
    shapeRendering="crispEdges"
  >
    <Bands top={883} height={155} />
    <GridColumns top={887} bottom={1038} />
    {volumeGrid.map(([y]) => (
      <line key={y} x1="49" x2="1862" y1={y + 0.5} y2={y + 0.5} stroke="#d4d4d4" strokeDasharray="4 4" />
    ))}
    {bars.map(([x, h, up]) => (
      <rect key={x} x={x} y={1037 - h} width="1" height={h} fill={up ? "#e51400" : "#0f5acd"} />
    ))}
    {volSpikes.map(([x, y, up]) => (
      <rect key={x} x={x} y={y} width="1" height={1037 - y} fill={up ? "#e51400" : "#0f5acd"} />
    ))}
    <line x1="49" x2="1853" y1="1036.5" y2="1036.5" stroke="#0f5acd" strokeDasharray="3 1" />
    {flowCyan.map((p) => <polygon key={p} points={p} fill="#ccffff" />)}
    <Line points={flowLine} color="#009933" width={1} />
    <Line points="180,914 200,915 240,921 330,923 600,921 900,923 1300,923 1853,923" color="#ccffff" width={2} dash="14 9" />
    {flowGreen.map((p) => <polygon key={p} points={p} fill="#008c32" />)}
    {obvOrange.map((p) => <polygon key={p} points={p} fill="#ff9900" stroke="#ff9900" />)}
    <g transform="translate(0 1)">
      <Line points={obvLine} color="#ff9900" width={2} dash="22 16" />
    </g>
    <Line points={brownLine} color="#993300" width={3} />
    {obvFills.map((p) => <polygon key={p} points={p} fill="#0000ff" stroke="#0000ff" />)}
    <Line points={obvLine} color="#0000ff" width={1} />
    <line x1="1287.5" x2="1287.5" y1="883" y2="1038" stroke="#dd0000" />
  </svg>
);

const LeftAxis = () => (
  <svg className="block h-full w-full" viewBox="7 77 41 805" preserveAspectRatio="none" fontSize="11" fill="#444">
    <rect x="12.5" y="96.5" width="13" height="13" fill="#fff" stroke="#000" />
    <path d="M14.5 98.5h9v9h-9zM14.5 101.5h9M14.5 104.5h9M17.5 101v6M20.5 101v6" fill="none" stroke="#777" />
    {priceLabels.map(([y, label]) => (
      <text key={y} x="46" y={y + 5} textAnchor="end">{label}</text>
    ))}
    <rect x="8.5" y="589.5" width="36" height="28" fill="#ffe070" stroke="#000" />
    <text x="41" y="601" textAnchor="end" fill="#555">2,480</text>
    <text x="43" y="613" textAnchor="end" fill="#0000c8">-1.98%</text>
    <rect x="10" y="620" width="34" height="12" fill="#0f5acd" />
    <text x="41" y="630" textAnchor="end" fill="#fff">2,475</text>
    <text x="40" y="642" textAnchor="end" fill="#0f5acd">.17%</text>
  </svg>
);

const RightAxis = () => (
  <svg className="block h-full w-full" viewBox="1867 77 46 805" preserveAspectRatio="none" fontSize="11" fill="#444">
    <text x="1869" y="88" fill="#e51400">LC:1.85</text>
    <text x="1869" y="100" fill="#0f5acd">HC:-4.0</text>
    {rightLabels.map(([y, label], i) => (
      <g key={y}>
        <path d={`M1867 ${y + 0.5}h6`} stroke="#999" />
        {i < 8 && [19, 37, 56, 75].map((dy) => (
          <path key={dy} d={`M1867 ${y + dy + 0.5}h2`} stroke="#999" />
        ))}
        <text x="1875" y={y + 4}>{label}</text>
      </g>
    ))}
    <rect x="1870.5" y="589.5" width="41" height="28" fill="#ffe070" stroke="#000" />
    <text x="1876" y="601" fill="#555">2,480</text>
    <text x="1873" y="613" fill="#0000c8">-1.98%</text>
    <rect x="1871" y="619" width="40" height="13" fill="#0f5acd" />
    <text x="1875" y="630" fill="#fff">2,475</text>
    <text x="1875" y="642" fill="#0f5acd">-2.17%</text>
  </svg>
);

const VolumeLeftAxis = () => (
  <svg className="block h-full w-full" viewBox="7 883 41 155" preserveAspectRatio="none" fontSize="11" fill="#444">
    {[889, 918, 947, 976, 1005, 1034].map((y) => (
      <path key={y} d={`M43 ${y + 0.5}h5M46 ${y - 5.5}h2M46 ${y + 6.5}h2M46 ${y + 12.5}h2M46 ${y + 18.5}h2`} stroke="#999" />
    ))}
    {[[918, "00,000"], [947, "50,000"], [976, "00,000"], [1005, "50,000"]].map(([y, label]) => (
      <text key={y} x="42" y={y + 4} textAnchor="end">{label}</text>
    ))}
  </svg>
);

const VolumeRightAxis = () => (
  <svg className="block h-full w-full" viewBox="1867 883 46 155" preserveAspectRatio="none" fontSize="11" fill="#444">
    <rect x="1903" y="886" width="8" height="7" fill="#444" />
    <path d="M1905 888l4 3M1909 888l-4 3" stroke="#fff" />
    {volumeGrid.map(([y, label]) => (
      <g key={y}>
        <path d={`M1867 ${y + 0.5}h6M1867 ${y + 12.5}h2`} stroke="#999" />
        <text x="1875" y={y + 4}>{label}</text>
      </g>
    ))}
  </svg>
);

const Arrow = () => (
  <svg viewBox="0 0 8 4" className="h-1 w-2 fill-[#444]">
    <path d="M0 0h8L4 4z" />
  </svg>
);

const toolButton = "flex h-5 items-center justify-center border border-[#999] bg-[#f0f0f0]";

const ButtonGroup = ({ items, active }) => (
  <div className="flex h-5 gap-px border border-[#999] bg-[#999]">
    {items.map((item) => (
      <button
        key={item}
        className={
          item === active
            ? "w-[18px] bg-[#4a82c8] leading-[18px] text-white"
            : "w-[18px] bg-[#f0f0f0] leading-[18px]"
        }
      >
        {item}
      </button>
    ))}
  </div>
);

const titleItems = [
  "[0601] 주식종합차트", "-", "유통비율[21.5]", "거래대금[3,529(백만)]", "시가총액[1,554(억)]", "주식수[62,777(천)]",
  "유통수[13,468(천)]", "EPS[-191]", "PBR[0.62]", "배당수익률[1.6]", "ROA[-1.4]", "유보율[699.0]",
  "부채비율[280.2]", "영업이익률[0.8]", "외국인보유[639(천)]",
];

const TitleBar = () => (
  <header className="mx-px flex h-6 items-center bg-[#3a5690] pl-[3px] pr-2 text-white">
    <span className="flex h-[15px] w-[14px] items-center justify-center rounded-[3px] border border-white bg-[#5a76b4] text-xs font-bold">
      1
    </span>
    <h1 className="ml-1 flex gap-[7px] whitespace-nowrap">
      {titleItems.map((item) => <span key={item}>{item}</span>)}
    </h1>
    <div className="ml-auto flex items-center gap-[5px] text-[#a8b8d8]">
      <button aria-label="분리" className="w-[14px]">
        <svg viewBox="0 0 14 12" className="h-3" fill="none" stroke="currentColor" strokeWidth="1.5">
          <path d="M5.5 1h8v6h-8zM5 5H1v6h8V8" />
        </svg>
      </button>
      <button aria-label="접기" className="w-[14px]">
        <svg viewBox="0 0 14 12" className="h-3" fill="none" stroke="currentColor">
          <path d="M1 9.5h12v2H1z" />
        </svg>
      </button>
      <button aria-label="복사" className="w-[14px]">
        <svg viewBox="0 0 14 12" className="h-3" fill="none" stroke="currentColor" strokeWidth="1.5">
          <path d="M4 1h9v7H4zM1 4v7h8" />
        </svg>
      </button>
      <button aria-label="고정" className="w-[14px]">
        <svg viewBox="0 0 14 14" className="h-[14px]" fill="currentColor">
          <path d="M3 0h8v2h-1v5h2v2H8v5H6V9H2V7h2V2H3z" />
        </svg>
      </button>
      <button className="w-3 font-['Liberation_Serif',serif] text-base font-bold leading-4">T</button>
      <button className="w-3 font-['Liberation_Serif',serif] text-base font-bold leading-4">?</button>
      <span className="mx-1 h-[14px] w-px bg-[#7088b8]" />
      <button aria-label="최소화" className="w-[13px]">
        <svg viewBox="0 0 12 12" className="h-3" fill="currentColor"><path d="M1 9h10v2H1z" /></svg>
      </button>
      <button aria-label="이전 크기" className="w-[13px]">
        <svg viewBox="0 0 12 12" className="h-3" fill="none" stroke="currentColor" strokeWidth="1.5">
          <path d="M4 2h7v6H9M1 5h7v6H1z" />
        </svg>
      </button>
      <button aria-label="닫기" className="w-[13px]">
        <svg viewBox="0 0 12 12" className="h-3" stroke="currentColor"><path d="M2 2l8 8M10 2l-8 8" /></svg>
      </button>
    </div>
  </header>
);

const Toolbar = () => (
  <div className="flex h-5 items-center gap-px pl-[3px]">
    <button aria-label="메뉴" className={`${toolButton} w-5`}>
      <svg viewBox="0 0 14 13" className="h-[13px]" fill="none" stroke="#444">
        <path d="M4.5 1.5h8v10h-8zM4 3.5h9" />
        <path d="M0 3l5 4-5 4z" fill="#222" stroke="none" />
      </svg>
    </button>
    <div className="relative h-5 w-8">
      <select aria-label="종목 구분" className="h-5 w-full appearance-none border border-[#999] bg-white pl-[3px] leading-4 text-[#666]">
        <option>주</option>
      </select>
      <span className="pointer-events-none absolute inset-y-px right-px flex w-3 items-center justify-center border-l border-[#999] bg-[#f0f0f0]"><Arrow /></span>
    </div>
    <button className={`${toolButton} w-5`}>전</button>
    <div className="flex h-5 border border-[#999] bg-white text-xs">
      <input aria-label="종목코드" className="w-[54px] pl-[2px] outline-none" defaultValue="450140" />
      <button aria-label="종목 목록" className="flex w-[13px] items-center justify-center bg-[#f0f0f0]"><Arrow /></button>
    </div>
    <button aria-label="검색" className={`${toolButton} w-[18px]`}><Search size={13} color="#777" /></button>
    <div className="flex">
      <button aria-label="소리" className={`${toolButton} w-[18px]`}><Volume1 size={14} color="#777" fill="#777" /></button>
      <button aria-label="소리 옵션" className={`${toolButton} w-3`}><Arrow /></button>
    </div>
    <div className="flex">
      <span className="flex h-5 w-[18px] items-center justify-center border-2 border-[#a04010] bg-[#006464] text-white">신</span>
      <span className="h-5 w-16 overflow-hidden border-y border-[#999] bg-white pl-px leading-[18px] whitespace-nowrap">코오롱모빌</span>
    </div>
    <ButtonGroup items={["일", "주", "월", "년"]} />
    <ButtonGroup items={["분", "초", "틱"]} active="초" />
    <div className="text-xs">
      <ButtonGroup items={["1", "3", "5", "10", "15", "30", "45", "60"]} active="5" />
    </div>
    <div className="relative h-5 w-[38px] text-xs">
      <select aria-label="틱 간격" className="h-5 w-full appearance-none border border-[#999] bg-white pl-2 leading-4">
        <option>5</option>
      </select>
      <span className="pointer-events-none absolute inset-y-px right-px flex w-3 items-center justify-center border-l border-[#999] bg-[#f0f0f0]"><Arrow /></span>
    </div>
    <input aria-label="조회 개수" className="h-5 w-[31px] border border-[#999] bg-white pl-px text-xs" defaultValue="1926" />
    <span className="w-[34px] text-xs text-[#444]">/3600</span>
    <div className="flex gap-px border border-[#999] bg-[#999]">
      {[ChartCandlestick, ChartSpline, Save, Settings].map((Icon, i) => (
        <button key={i} aria-label="차트 도구" className="flex h-[18px] w-[18px] items-center justify-center bg-[#f0f0f0]">
          <Icon size={14} color="#555" />
        </button>
      ))}
    </div>
    <label className="flex items-center gap-[3px] text-xs">
      <input type="checkbox" className="h-[13px] w-[13px] appearance-none border border-[#888] bg-white" />
      D
    </label>
  </div>
);

const QuoteRow = () => (
  <div className="flex h-5 items-center gap-[3px] pl-[3px] text-right text-xs leading-[18px]">
    <div className="flex h-5 w-[750px] border border-[#888] bg-[#f0f0f0]">
      <span className="w-[73px] text-[#1046c8]">2,475▼</span>
      <span className="w-[48px] text-[#1046c8]">55</span>
      <span className="w-[50px] border-r border-[#bbb] pr-[2px] text-[#1046c8]">-2.17%</span>
      <span className="w-[70px]">1,415,269</span>
      <span className="w-[58px] text-[#1046c8]">14.93%</span>
      <span className="w-[43px] border-r border-[#bbb] pr-[2px]">2.25%</span>
      <span className="w-[83px] border-r border-[#bbb] pr-[2px]">3,529백만</span>
      <span className="w-[37px]">최우선</span>
      <span className="w-[43px] text-[#1046c8]">2,455</span>
      <span className="w-[59px] border-r border-[#bbb] pr-[9px] text-[#1046c8]">2,450</span>
      <span className="w-[14px]">시</span>
      <span className="w-[40px]">2,530</span>
      <span className="w-[20px]">고</span>
      <span className="w-[40px] text-[#e51400]">2,580</span>
      <span className="w-[21px]">저</span>
      <span className="w-[40px] text-[#1046c8]">2,430</span>
    </div>
    <button className="h-5 w-10 border border-[#888] bg-[#f5d0cb] text-[13px]">매수</button>
    <button className="h-5 w-10 border border-[#888] bg-[#c6dcf2] text-[13px]">매도</button>
  </div>
);

const bottomIcons = [
  "M1 1h9v9H1zM6 6h7v7H6zM9.5 6v7M6 9.5h7",
  "M1 1h8v8H1zM5 5h8v8H5z",
  "M0 10l3-3 3 2 3-4 3 2M1 1.5h11M1 12.5h11",
  "M0 3.5h13M4.5 0v13M6 5l5 5M6 5v4M6 5h4",
  "M0 3.5h13M1 12l3-5 3 3 3-7 3 6",
  "M4.5 0v13M0 10l3-4 3 4 3-4 4 5",
  "M1 12L11 1M0 11l4-5 3 4 3-3 3 5",
];

const BottomBar = () => (
  <div className="flex h-[17px] items-stretch bg-[#e8e8e8]">
    <button aria-label="왼쪽으로" className="flex w-4 items-center justify-center border border-[#aaa] border-b-[#666] bg-[#f0f0f0]">
      <svg viewBox="0 0 5 8" className="h-2"><path d="M5 0v8L0 4z" /></svg>
    </button>
    <div className="grow-[709] basis-0 bg-[#f4f4f4]" />
    <div className="grow-[813] basis-0 border border-[#ddd] border-b-2 border-b-[#777] bg-[#f0f0f0]" />
    {["M1 0v8l5-4z", "M4 0v8L0 4zM9 0v8L5 4z", "M0 0h8v8H0z", "M0 0v8l4-4zM5 0v8l4-4z"].map((d) => (
      <button key={d} aria-label="재생 제어" className="flex w-[17px] items-center justify-center border border-[#aaa] border-r-[#666] border-b-[#666] bg-[#f0f0f0]">
        <svg viewBox="0 0 9 8" className="h-2 w-[9px]"><path d={d} /></svg>
      </button>
    ))}
    <label className="mx-[5px] flex w-[69px] flex-col justify-between">
      <input
        type="range"
        aria-label="확대 비율"
        defaultValue="55"
        className="mt-1 h-[3px] w-full appearance-none bg-[#999] [&::-webkit-slider-thumb]:h-3 [&::-webkit-slider-thumb]:w-1 [&::-webkit-slider-thumb]:appearance-none [&::-webkit-slider-thumb]:border [&::-webkit-slider-thumb]:border-[#777] [&::-webkit-slider-thumb]:bg-[#eee]"
      />
      <span className="flex h-[3px] justify-between px-[2px]">
        {Array.from({ length: 10 }, (_, i) => <i key={i} className="w-px bg-black" />)}
      </span>
    </label>
    <div className="flex items-center gap-[2px] text-[#666]">
      {bottomIcons.map((d, i) => (
        <button key={d} aria-label="차트 표시" className={i === 3 ? "flex h-4 w-[15px] items-center justify-center bg-white" : "flex w-[15px] justify-center"}>
          <svg viewBox="0 0 14 14" className="h-[14px] w-[14px]" fill="none" stroke="currentColor"><path d={d} /></svg>
        </button>
      ))}
      <button aria-label="지우기" className="flex w-[15px] justify-center"><Eraser size={14} /></button>
      <button aria-label="차트 복사" className="flex w-[15px] justify-center"><Copy size={13} /></button>
      <button aria-label="돋보기" className="flex w-[15px] justify-center"><Search size={14} /></button>
      <button aria-label="축소" className="flex w-[15px] justify-center"><Minus size={13} strokeWidth={3} /></button>
      <button aria-label="확대" className="flex w-[15px] justify-center"><Plus size={13} strokeWidth={3} /></button>
      <button className="w-[15px] text-[15px] font-bold leading-4">A</button>
    </div>
  </div>
);

const TimeAxis = () => (
  <div className="grid h-[18px] grid-cols-[42px_1fr_47px] border-b border-[#999] bg-white text-xs leading-[15px] text-[#444]">
    <div className="border-r border-[#999]" />
    <div className="relative flex">
      {timeTicks.map(([x, label], i) => {
        const next = timeTicks[i + 1] ? timeTicks[i + 1][0] : 1866;
        return (
          <span
            key={x}
            className="min-w-0 basis-0 overflow-visible whitespace-nowrap border-l border-[#999] pl-px first:border-l-0 first:pl-[2px] first:font-bold"
            style={{ flexGrow: next - x }}
          >
            {label}
          </span>
        );
      })}
      <span className="absolute left-[64.4%] h-[17px] w-[136px] whitespace-nowrap border border-black bg-[#ffe070] text-center">
        2025/04/02(수) 12:48:25
      </span>
    </div>
    <div className="whitespace-nowrap border-l border-[#999] pl-[5px] text-[11px]">15:19:5</div>
  </div>
);

const App = () => {
  return (
    <div className="flex h-screen min-h-[600px] flex-col border-y border-b-[3px] border-black bg-black font-['Noto_Sans_CJK_KR',sans-serif] text-[13px] text-black">
      <TitleBar />
      <main className="mx-[3px] flex min-h-0 grow flex-col bg-[#e8e8e8] pb-[3px]">
        <div className="flex h-[51px] flex-col gap-[3px] bg-[#d0d0d0] pt-[5px]">
          <Toolbar />
          <QuoteRow />
        </div>

        <div className="mx-[3px] flex min-h-0 grow flex-col border-x border-t border-[#999] bg-white">
          {/* Price pane */}
          <section className="relative grid min-h-0 grow grid-cols-[42px_1fr_47px] grid-rows-[minmax(0,1fr)]">
            <div className="min-h-0 border-r border-[#999]"><LeftAxis /></div>
            <PricePlot />
            <div className="min-h-0 border-l border-[#999]"><RightAxis /></div>
            <div className="absolute left-[45px] top-px flex items-center gap-1">
              <span className="h-[6px] w-[6px] border border-[#777] bg-[#bbb]" />
              <h2 className="border border-[#bbb] bg-[#f0f0f0] px-[2px] leading-[13px] text-[#333]">
                코오롱모빌리티그룹 매물대 수(13)
              </h2>
            </div>
          </section>

          {/* Volume pane */}
          <section className="grid h-[157px] shrink-0 grid-cols-[42px_1fr_47px] grid-rows-[minmax(0,1fr)] border-y border-[#999]">
            <div className="border-r border-[#999]"><VolumeLeftAxis /></div>
            <VolumePlot />
            <div className="border-l border-[#999]"><VolumeRightAxis /></div>
          </section>

          <TimeAxis />
          <BottomBar />
        </div>
      </main>
    </div>
  );
};

export default App;
